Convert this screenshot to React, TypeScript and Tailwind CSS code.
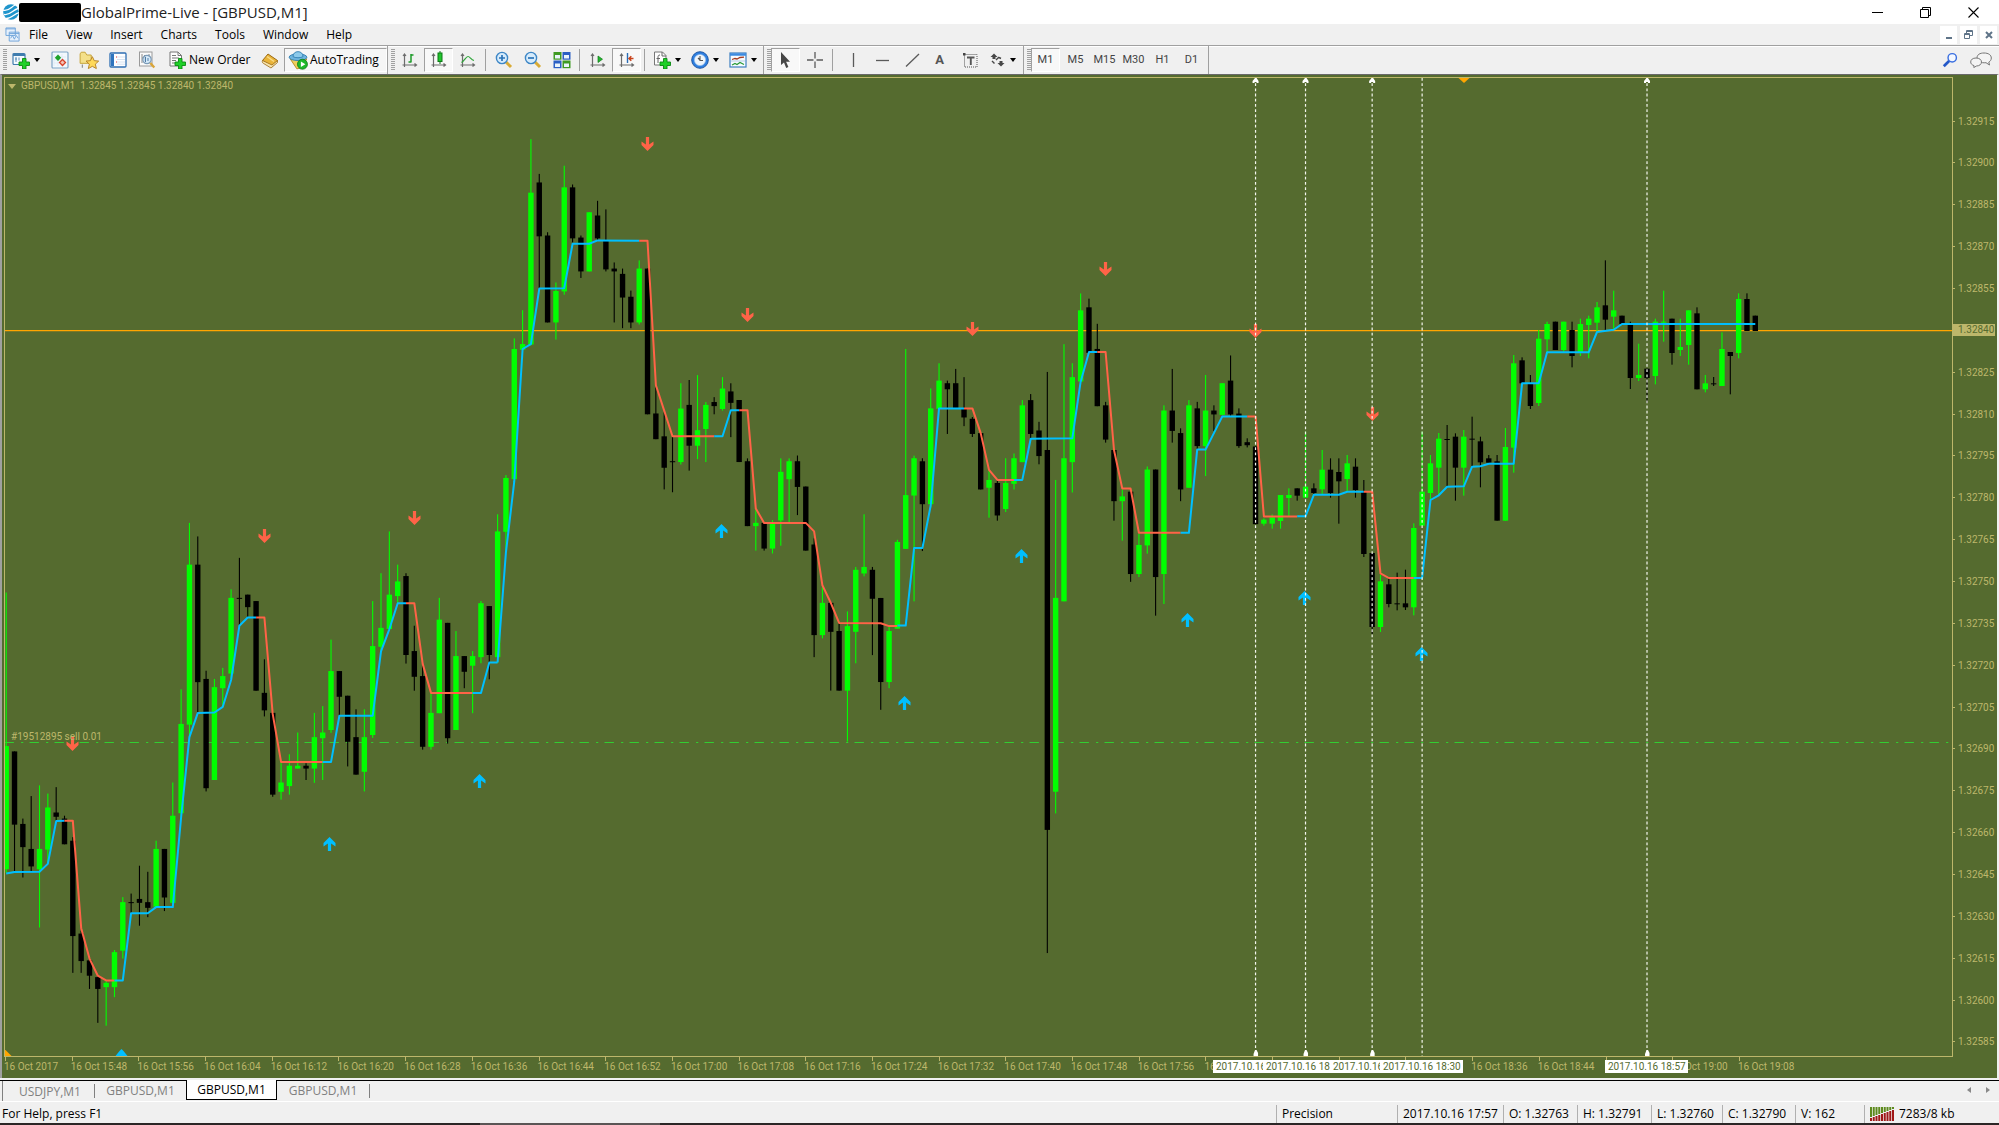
import React from "react";

/* ------------------------------------------------------------------ */
/* Market data                                                         */
/* ------------------------------------------------------------------ */

// Each block holds consecutive bars as "direction high top bottom low",
// in the block's own units: y = top + value / zoom.
type Block = { first: number; top: number; zoom: number; bars: string; lines: [string, string][] };

const UP = "#00bfff";
const DOWN = "#ff6347";

const blocks: Block[] = [
  {
    first: 0,
    top: 480,
    zoom: 2.8,
    bars:
      "g 315 745 1090 1100;k 760 760 965 1098;k 948 963 1028 1113;k 885 1033 1082 1095;g 855 1033 1090 1253;g 878 917 1035 1075;k 860 931 943 955;k 940 948 1020 1020;k 1000 1010 1277 1380;k 1262 1270 1347 1380;k 1340 1345 1388 1425;k 1390 1392 1425 1520;g 1400 1408 1420 1528;g 1316 1322 1420 1448;g 1168 1182 1318 1340;k 1158 1182 1184 1212;k 1080 1173 1184 1248;k 1097 1182 1198 1224;g 1010 1033 1195 1198;k 1033 1033 1169 1207;g 847 940 1184 1190;g 586 683 933 945;g 120 237 685 720;k 158 237 566 652;k 534 557 863 872;g 557 580 840 840;g 526 549 583 635;g 306 330 542 555;k 218 330 332 408;k 321 321 356 385;k 339 339 590 590;k 502 596 645 662;k 652 652 881 887;g 790 847 873 895;g 768 800 857 881;g 707 800 808 808;k 793 800 808 840;g 652 720 808 848;g 633 707 723 840;g 447 535 700 708;k 535 535 607 660;k 604 604 733 802;k 642 720 825 825;g 642 720 817 872;g 339 465 714 722;g 261 414 467 480;g 144 321 417 420;g 237 284 325 345;k 261 269 490 514;k 408 479 551 590;k 517 549 747 755;g 596 652 747 755;g 330 391 653 653;k 400 400 723 738;g 423 493 700 700;k 493 493 537 583;g 479 493 520 653;g 339 345 496 513;k 353 353 490 558",
    lines: [
      [UP, "0 1102 1 1098 4 1097 5 1075 6 955 7 954"],
      [DOWN, "7 954 8 954 9 1255 10 1340 11 1388 12 1401 13 1401"],
      [UP, "13 1401 14 1401 15 1213 17 1213 18 1196 20 1196 21 945 22 720 23 652 25 651 26 635 27 560 28 408 29 385 30 385"],
      [DOWN, "30 385 31 385 32 655 33 790 38 790"],
      [UP, "38 790 39 790 40 660 44 660 45 480 46 418 47 345 48 345"],
      [DOWN, "48 345 49 345 50 515 51 596 56 596"],
      [UP, "56 596 57 596 58 511 59 511"],
    ],
  },
  {
    first: 59,
    top: 120,
    zoom: 2.45,
    bars:
      "g 966 1008 1316 1330;g 870 877 1009 1060;g 535 561 880 890;g 466 549 563 563;g 47 178 550 552;k 132 153 285 413;k 275 283 496 496;g 398 419 496 538;g 112 165 420 428;k 158 165 290 300;k 283 288 371 387;g 226 226 371 371;k 198 234 290 295;k 219 295 366 371;k 349 364 371 496;k 364 377 435 510;k 418 433 496 510;g 344 364 496 501;k 364 364 721 721;k 655 719 782 782;k 716 775 852 905;k 775 836 838 912;g 645 707 838 844;k 637 698 798 859;g 625 760 798 831;g 691 698 757 838;k 679 691 701 721;g 630 658 708 712;k 645 665 693 777;k 686 686 838 838;k 829 836 995 995;g 950 987 995 1055;k 987 987 1050 1055;g 980 987 1050 1062;g 829 862 981 1043;g 829 836 880 985;k 822 836 899 968;k 898 898 1055 1055;k 1025 1040 1262 1316;g 1145 1183 1262 1270;k 1183 1183 1254 1398;k 1232 1252 1398 1398;g 1204 1240 1398 1523;g 1095 1102 1254 1331;g 966 1095 1111 1118;k 1095 1102 1173 1311;k 1171 1171 1377 1445;g 1240 1252 1377 1392",
    lines: [
      [UP, "59 1329 60 1060 61 885 62 561 63 549 64 413 67 412 68 303 70 303 71 295 76 296"],
      [DOWN, "76 296 77 296 78 650 79 712 80 775 85 775"],
      [UP, "85 775 86 775 87 711 88 711"],
      [DOWN, "88 711 89 711 90 952 91 987 96 987 97 1008 98 1140 99 1183 100 1232 105 1233 106 1240 107 1240"],
    ],
  },
  {
    first: 107,
    top: 280,
    zoom: 2.3059,
    bars:
      "g 599 604 804 804;g 159 496 620 620;g 405 411 497 741;k 411 418 517 625;g 250 296 517 525;g 192 232 297 297;k 232 238 252 355;k 205 238 295 297;k 224 297 317 337;k 316 320 355 362;k 353 353 483 483;g 440 461 479 548;k 462 468 543 555;g 411 468 528 535;g 400 411 470 483;g 277 289 420 420;k 263 277 355 365;k 327 347 406 425;k 212 392 1268 1552;g 461 733 1180 1230;g 148 411 741 741;g 192 224 420 490;g 31 70 234 234;k 43 63 168 168;k 101 159 291 291;k 281 289 368 375;k 392 392 510 555;g 483 499 510 601;k 488 488 678 696;g 585 611 678 685;g 430 437 612 631;k 437 437 685 774;g 289 301 678 747;k 205 301 348 375;k 342 353 483 510;g 277 289 479 479;k 281 296 383 391;g 219 301 383 452;k 289 301 310 348;g 238 238 311 311;k 174 232 310 313;k 296 308 383 387;k 365 374 381 386;k 384 384 563 563",
    lines: [
      [UP, "107 797 108 797 109 618 110 618 111 520 112 296 115 296"],
      [DOWN, "115 296 116 296 117 353 118 438 119 461 121 461"],
      [UP, "121 461 122 461 123 366 128 365 129 235 130 166 131 166"],
      [DOWN, "131 166 132 166 133 392 134 481 135 481 136 583 141 583"],
      [UP, "141 583 142 583 143 391 144 391 146 315 149 315"],
      [DOWN, "149 315 150 315 151 545 155 545"],
    ],
  },
  {
    first: 151,
    top: 240,
    zoom: 3,
    bars:
      "g 835 839 851 857;g 823 832 851 866;g 765 765 843 866;g 745 765 774 828;k 745 745 767 782;g 575 740 773 773;k 730 745 759 765;g 630 689 748 762;k 655 689 759 773;k 655 696 724 851;g 645 670 717 755;k 655 680 750 773;k 720 755 942 951;k 939 939 1161 1182;g 1005 1024 1161 1176;k 1014 1033 1092 1102;k 998 1090 1092 1111;k 989 1090 1102 1110;g 850 864 1102 1126;g 575 755 857 857;g 645 670 759 780;g 579 596 683 765;k 555 597 599 740;k 580 590 683 782;g 570 590 683 767;k 530 596 598 682;k 590 604 667 742;k 645 655 668 671;k 645 664 842 842;g 564 621 842 842;g 345 370 623 698;k 352 361 430 430;k 405 430 498 507;g 270 296 489 498;g 245 252 298 336;k 245 245 330 330;g 245 245 330 336;k 245 270 348 382;g 236 252 336 348;g 227 236 255 355;g 186 202 248 275;k 61 196 239 271;g 152 211 230 268;k 227 227 252 252;k 245 252 414 447;g 311 405 414 423;k 386 386 414 489;g 236 245 408 433;g 152 245 248 305;k 236 236 339 374;g 236 321 330 348;g 211 211 315 374;k 202 220 448 448;g 405 430 448 457;k 411 430 432 438;g 277 327 438 438;k 336 336 348 463;g 160 177 339 355;k 160 177 273 273;k 227 227 273 273",
    lines: [
      [UP, "155 829 156 829 157 764 160 764 161 755 163 755"],
      [DOWN, "163 755 164 755 165 1000 166 1014 169 1014"],
      [UP, "169 1014 170 1014 171 780 172 766 173 740 175 739 176 680 177 679 178 671 181 671 182 430 184 430 185 337 190 337 191 276 193 269 194 252 210 252"],
    ],
  },
];

const barX = (i: number) => 5.7 + i * 8.329;

const candles = blocks.flatMap((b) =>
  b.bars.split(";").map((row, n) => {
    const [dir, ...v] = row.split(" ");
    const [high, top, bottom, low] = v.map((q) => b.top + Number(q) / b.zoom);
    return { x: barX(b.first + n), color: dir === "g" ? "#00ff00" : "#000000", high, top, bottom, low };
  }),
);

const trend = blocks.flatMap((b) =>
  b.lines.map(([color, text]) => {
    const n = text.split(" ").map(Number);
    const pts: string[] = [];
    for (let i = 0; i < n.length; i += 2) pts.push(`${barX(n[i]).toFixed(1)},${(b.top + n[i + 1] / b.zoom).toFixed(1)}`);
    return { color, points: pts.join(" ") };
  }),
);

const sellMarks = [[72, 744], [264, 536], [414, 518], [647, 144], [747, 315], [972, 329], [1105, 269], [1255, 331], [1372, 414]];
const buyMarks = [[329, 844], [479, 781], [721, 531], [904, 703], [1021, 556], [1187, 620], [1304, 598], [1421, 654]];
const verticals = [150, 156, 164, 170, 197];

const prices = Array.from({ length: 23 }, (_, i) => (1.32915 - i * 0.00015).toFixed(5));
const times = [
  "16 Oct 2017",
  ...Array.from({ length: 26 }, (_, i) => {
    const m = 15 * 60 + 48 + i * 8;
    return `16 Oct ${Math.floor(m / 60)}:${String(m % 60).padStart(2, "0")}`;
  }),
];

/* ------------------------------------------------------------------ */
/* Chart                                                               */
/* ------------------------------------------------------------------ */

function Plot() {
  return (
    <svg viewBox="4.5 78 1947 978" preserveAspectRatio="none" className="block h-full w-full" role="img" aria-label="GBPUSD one minute chart">
      <line x1="4" x2="1953" y1="742.5" y2="742.5" stroke="#32cd32" strokeDasharray="9.4 7.2 2.2 6.2" />
      <line x1="4" x2="1953" y1="330.6" y2="330.6" stroke="#ffa500" strokeWidth="1.1" />
      {candles.map((c, i) => (
        <g key={i} fill={c.color}>
          <rect x={c.x - 0.55} y={c.high} width="1.1" height={c.low - c.high} />
          <rect x={c.x - 2.7} y={c.top} width="5.4" height={Math.max(1, c.bottom - c.top)} />
        </g>
      ))}
      {trend.map((t, i) => (
        <polyline key={i} points={t.points} fill="none" stroke={t.color} strokeWidth="2" strokeLinejoin="round" />
      ))}
      {sellMarks.map(([x, y]) => (
        <path key={`${x}`} transform={`translate(${x} ${y})`} fill={DOWN} d="M-1.6-7h3.2v7.6L6-2.6V1L0 7-6 1v-3.6L-1.6.6z" />
      ))}
      {buyMarks.map(([x, y]) => (
        <path key={`${x}`} transform={`translate(${x} ${y}) scale(1 -1)`} fill={UP} d="M-1.6-7h3.2v7.6L6-2.6V1L0 7-6 1v-3.6L-1.6.6z" />
      ))}
      {verticals.map((v) => (
        <g key={v} transform={`translate(${barX(v)} 0)`}>
          <line y1="78" y2="1056" stroke="#f4f6ee" strokeWidth="1.2" strokeDasharray="2.8 2.4" />
          {v !== 170 && <path fill="#fff" d="M-.5 78h1.5l2 3v2h-2v-1h-2v1h-2v-2zM-.5 1050h1.5l1.500 3v3h-4.500v-2z" />}
        </g>
      ))}
      <path d="M1458 78h11l-5.500 5z" fill="#ffa500" />
      <path d="M4 1049l7 7H4z" fill="#ffa500" />
      <path d="M115 1056l4-5 2-2 2 2 4 5z" fill="#00bfff" />
    </svg>
  );
}

function Flag({ text, className }: { text: string; className: string }) {
  return <span className={`absolute top-[3px] h-[13px] overflow-hidden bg-white pl-[3px] leading-[13px] whitespace-nowrap text-[#556b2f] ${className}`}>{text}</span>;
}

function Chart() {
  return (
    <main className="flex min-h-0 flex-1 border-t border-r-2 border-l-2 border-t-[#696969] border-r-[#f0f0f0] border-l-[#a0a0a0] bg-[#556b2f] font-[Roboto,sans-serif] text-[10px] text-[#bdb76b]">
      <div className="flex min-w-0 flex-1 flex-col pt-[2px] pl-[2px]">
        <div className="flex min-h-0 flex-1">
          <div className="relative min-w-0 flex-1 border border-[#bdb76b]">
            <Plot />
            <div className="absolute top-[2px] left-[3px] flex items-center leading-[12px] whitespace-pre">
              <svg viewBox="0 0 8 5" className="mr-[5px] h-[5px] w-[8px]">
                <path d="M0 0h8L4 5z" fill="#bdb76b" />
              </svg>
              GBPUSD,M1{"  "}1.32845 1.32845 1.32840 1.32840
            </div>
            <div className="absolute top-[653px] left-[6px] leading-[12px]">#19512895 sell 0.01</div>
          </div>
          <ol className="flex w-[44px] flex-col justify-between pt-[44px] pb-[15px]">
            {prices.map((p) => (
              <li key={p} className="flex h-0 items-center">
                {p === "1.32840" ? (
                  <span className="h-[12px] w-[42px] bg-[#bdb76b] pl-[5px] leading-[12px] text-[#556b2f]">{p}</span>
                ) : (
                  <>
                    <i className="mr-[3px] h-px w-[2px] bg-[#bdb76b]" />
                    {p}
                  </>
                )}
              </li>
            ))}
          </ol>
        </div>
        <div className="relative h-[21px]">
          <ol className="mr-[259px] flex justify-between">
            {times.map((t) => (
              <li key={t} className="w-0 whitespace-nowrap">
                <i className="ml-[1px] block h-[4px] w-px bg-[#bdb76b]" />
                <span className="block leading-[12px]">{t}</span>
              </li>
            ))}
          </ol>
          <Flag className="left-[1209px] w-[50px]" text="2017.10.16 18:10" />
          <Flag className="left-[1259px] w-[67px]" text="2017.10.16 18:16" />
          <Flag className="left-[1326px] w-[50px]" text="2017.10.16 18:24" />
          <Flag className="left-[1376px] w-[83px]" text="2017.10.16 18:30" />
          <Flag className="left-[1601px] w-[83px]" text="2017.10.16 18:57" />
        </div>
      </div>
    </main>
  );
}

/* ------------------------------------------------------------------ */
/* Icons                                                               */
/* ------------------------------------------------------------------ */

function Ico({ children, size = "h-[18px] w-[18px]" }: { children: React.ReactNode; size?: string }) {
  return (
    <svg viewBox="0 0 18 18" fill="none" className={`shrink-0 ${size}`} aria-hidden="true">
      {children}
    </svg>
  );
}

const Plus = () => <path d="M10.500 7.500h3.500v3.500h3.500v3.500h-3.500v3.500h-3.500v-3.500H7V11h3.500z" fill="#1fd028" stroke="#0a8a12" strokeWidth=".9" />;
const Axes = () => <path d="M3.500 3v13M1.500 14h14M2 5l1.500-2L5 5M13.500 12.500l2 1.500-2 1.500" stroke="#6c6c6c" strokeWidth="1.200" />;

const icons = {
  newChart: (
    <Ico>
      <rect x="1" y="2.500" width="12" height="11" rx="1" fill="#f4f9fd" stroke="#3f7cae" strokeWidth="1.200" />
      <path d="M1 4h12" stroke="#3f7cae" strokeWidth="2" />
      <path d="M4 6v5M3 8h2M7 6.500v3" stroke="#5b8fb9" />
      <Plus />
    </Ico>
  ),
  marketWatch: (
    <Ico>
      <rect x="1" y="1" width="16" height="16" rx="1" fill="#f2f8fd" stroke="#7fa6c7" strokeWidth="1.200" />
      <path d="M3 3v12M3 6h12M3 9h12M3 12h12M7 3v12M11 3v12" stroke="#dbe8f2" strokeWidth=".7" />
      <path d="M7 3.500l3.200 3.200L7 10 3.800 6.700z" fill="#1fa32a" />
      <path d="M11.500 8.500l3 3-3 3-3-3z" fill="#f4c2b4" stroke="#d8432a" strokeWidth="1.300" />
    </Ico>
  ),
  navigator: (
    <Ico size="h-[20px] w-[20px]">
      <path d="M1 3.500v8.500h10V4.500H7L5.500 2H2z" fill="#f4e08a" stroke="#c8a63c" strokeWidth=".9" />
      <path d="M12 6l1.700 3.600 4 .4-3 2.700.9 4-3.600-2-3.600 2 .9-4-3-2.700 4-.4z" fill="#ffd95a" stroke="#b9862a" strokeWidth=".9" />
      <path d="M3 13v3" stroke="#888" />
    </Ico>
  ),
  terminal: (
    <Ico>
      <rect x="1" y="2" width="16" height="14" rx="1" fill="#fff" stroke="#2f6fb3" strokeWidth="1.300" />
      <rect x="2" y="3" width="3" height="12" fill="#2f74bd" />
      <path d="M8 6h8M8 8.500h8M8 11h8M8 13.200h8" stroke="#cddced" strokeWidth=".8" />
      <path d="M7 6h1M7 11h1" stroke="#d33" />
    </Ico>
  ),
  tester: (
    <Ico>
      <rect x="1.500" y="1" width="12.500" height="14" fill="#fafafa" stroke="#9a9a9a" />
      <path d="M4 3v9M6.500 4v6M4 7h3M11 3v3" stroke="#8a8a8a" />
      <circle cx="9" cy="8.500" r="4.200" fill="#cfe6f8" fillOpacity=".85" stroke="#7d9cb8" strokeWidth="1.200" />
      <path d="M7.500 6v5M10 7v3" stroke="#4f7da8" />
      <path d="M12.300 12l4 4.500" stroke="#d9a53a" strokeWidth="2.400" />
    </Ico>
  ),
  order: (
    <Ico>
      <path d="M2 1h8l3.500 3.500V15H2z" fill="#fdfdfd" stroke="#777" />
      <path d="M10 1v3.500h3.500M4 4.500h4M4 7h7M4 9.500h4M4 12h3" stroke="#777" />
      <Plus />
    </Ico>
  ),
  book: (
    <Ico>
      <path d="M1.500 9.500L7 3l9.500 6.500-5.500 6.500z" fill="#e9b43a" stroke="#9b6a14" />
      <path d="M1.500 9.500c-.6 1.500 0 2.300.8 2.800L10 17l6.500-5.500v-2L11 14z" fill="#f7e3ab" stroke="#9b6a14" strokeWidth=".8" />
      <path d="M6 5.500l7 5" stroke="#f9dc86" strokeWidth="1.500" />
    </Ico>
  ),
  auto: (
    <Ico size="h-[20px] w-[20px]">
      <path d="M2 8l6 9 4-1 5-8z" fill="#efcf5c" stroke="#b58b24" strokeWidth=".8" />
      <ellipse cx="9" cy="6.500" rx="8" ry="3" fill="#6fb5df" stroke="#2f7db0" strokeWidth=".8" />
      <path d="M4.500 6c0-3 2-4.500 4.500-4.500S13.500 3 13.500 6c-2 1.300-7 1.300-9 0z" fill="#8ccaeb" stroke="#2f7db0" strokeWidth=".8" />
      <circle cx="13" cy="12.800" r="4.500" fill="#1db82a" stroke="#0d7a16" strokeWidth=".7" />
      <path d="M11.600 10.300l4 2.500-4 2.500z" fill="#fff" />
    </Ico>
  ),
  bars: (
    <Ico>
      <Axes />
      <path d="M10 3v8.500M7.500 11h2.500M10 4h2.500" stroke="#1c9a28" strokeWidth="1.500" />
    </Ico>
  ),
  candle: (
    <Ico>
      <Axes />
      <path d="M10 0v13" stroke="#0d7a16" />
      <rect x="8" y="2" width="4" height="8.500" fill="#22c52e" stroke="#0d7a16" />
    </Ico>
  ),
  line: (
    <Ico>
      <Axes />
      <path d="M2.500 11.500C6 9 7 5.500 9 5.500s3 3.500 6 4" stroke="#2fa53a" strokeWidth="1.200" />
    </Ico>
  ),
  zoomIn: (
    <Ico>
      <path d="M11 11l5 5" stroke="#d9ab35" strokeWidth="3" />
      <circle cx="7" cy="7" r="5.600" fill="#d6ebfb" stroke="#3d86c6" strokeWidth="1.400" />
      <path d="M7 4v6M4 7h6" stroke="#2b74b8" strokeWidth="1.700" />
    </Ico>
  ),
  zoomOut: (
    <Ico>
      <path d="M11 11l5 5" stroke="#d9ab35" strokeWidth="3" />
      <circle cx="7" cy="7" r="5.600" fill="#d6ebfb" stroke="#3d86c6" strokeWidth="1.400" />
      <path d="M4 7h6" stroke="#2b74b8" strokeWidth="1.700" />
    </Ico>
  ),
  tiles: (
    <Ico>
      <rect x=".5" y="1" width="8" height="7.700" fill="#3f9a22" />
      <rect x="9.500" y="1" width="8" height="7.700" fill="#2b5fc4" />
      <rect x=".5" y="9.500" width="8" height="7.700" fill="#2b5fc4" />
      <rect x="9.500" y="9.500" width="8" height="7.700" fill="#3f9a22" />
      <path d="M2 4h5v3.500H2zM11 4h5v3.500h-5zM2 12.500h5V16H2zM11 12.500h5V16h-5z" fill="#eaf4fb" />
    </Ico>
  ),
  scroll: (
    <Ico>
      <Axes />
      <path d="M9 5l4.500 3.200L9 11.500z" fill="#22b52e" stroke="#0d7a16" strokeWidth=".7" />
    </Ico>
  ),
  shift: (
    <Ico>
      <Axes />
      <path d="M9.500 2v10" stroke="#2a6db5" strokeWidth="1.400" />
      <path d="M11 7.500h4.500M13.300 5.200L11 7.500l2.300 2.300" stroke="#c8431c" strokeWidth="1.500" />
    </Ico>
  ),
  indicators: (
    <Ico>
      <path d="M1.500 1h8l3.500 3.500V14H1.500z" fill="#fdfdfd" stroke="#777" />
      <path d="M9 1v4h4M7 4c-2 0-2 1-2 3v5M3.500 7.500H7" stroke="#666" />
      <Plus />
    </Ico>
  ),
  clock: (
    <Ico>
      <circle cx="9" cy="9" r="8.300" fill="#2f7fe0" stroke="#164f9e" strokeWidth=".9" />
      <circle cx="9" cy="9" r="5.600" fill="#f0f5fa" stroke="#9dc4ee" strokeWidth=".6" />
      <path d="M9 5v4.500h3M7 7l2 2" stroke="#555" strokeWidth="1.100" />
    </Ico>
  ),
  template: (
    <Ico>
      <rect x="1" y="2" width="16" height="14" fill="#f7fbff" stroke="#3c7fc0" strokeWidth="1.200" />
      <path d="M1 3.500h16" stroke="#3c8be0" strokeWidth="2.500" />
      <path d="M3 8.500l3-1 2 .5 3-1.500 4-.3" stroke="#a33b22" strokeWidth="1.300" />
      <path d="M2 10h14" stroke="#9bbbd8" strokeWidth=".7" />
      <path d="M3 14l3-1.500 2 1 3-2 4 2" stroke="#2a9a38" strokeWidth="1.200" />
    </Ico>
  ),
  cursor: (
    <Ico>
      <path d="M4 1v13l3-2.600L9.200 17l2.200-1-2.300-5.300H13z" fill="#474747" />
    </Ico>
  ),
  cross: (
    <Ico>
      <path d="M9 1v6.500M9 10.500V17M1 9h6.500M10.500 9H17" stroke="#5a5a5a" strokeWidth="1.300" />
    </Ico>
  ),
  vline: (
    <Ico>
      <path d="M9.500 2v14" stroke="#5a5a5a" strokeWidth="1.300" />
    </Ico>
  ),
  hline: (
    <Ico>
      <path d="M3 9.500h13" stroke="#5a5a5a" strokeWidth="1.300" />
    </Ico>
  ),
  trendline: (
    <Ico>
      <path d="M4 15.500L17 3" stroke="#5a5a5a" strokeWidth="1.300" />
    </Ico>
  ),
  label: (
    <Ico>
      <rect x="4.500" y="3.500" width="12.500" height="12.500" stroke="#555" strokeWidth="1" strokeDasharray="1 1" />
      <path d="M3 2h2.500v2.500H3z" fill="#444" />
      <path d="M7 6.500h7.500M10.800 6v8" stroke="#555" strokeWidth="1.900" />
    </Ico>
  ),
  arrows: (
    <Ico>
      <path d="M6 2.500L9.500 6H7.500v2h-3V6h-2zM13 15.500L9.500 12h2v-2h3v2h2z" fill="#474747" />
      <path d="M4 10l2.500 2.500M8 9l3-3M11 6.500l2 1" stroke="#474747" strokeWidth="1.400" />
    </Ico>
  ),
};

/* ------------------------------------------------------------------ */
/* Chrome                                                              */
/* ------------------------------------------------------------------ */

const Grip = () => <i className="ml-[3px] h-[22px] w-[4px] shrink-0 bg-[repeating-linear-gradient(#a0a0a0_0_1px,#f0f0f0_1px_2px)]" />;
const Sep = () => <i className="mx-[3px] h-[22px] w-px shrink-0 bg-[#a0a0a0]" />;
const Caret = () => <i className="ml-[4px] h-0 w-0 border-x-[3px] border-t-[4px] border-x-transparent border-t-black" />;

function Tool({ label, icon, menu, active, children }: { label: string; icon?: React.ReactNode; menu?: boolean; active?: boolean; children?: React.ReactNode }) {
  return (
    <button
      type="button"
      aria-label={label}
      aria-pressed={active}
      className={`flex h-[24px] shrink-0 items-center justify-center ${menu ? "w-[38px]" : "w-[29px]"} ${
        active ? "border border-t-[#a0a0a0] border-r-white border-b-white border-l-[#a0a0a0] bg-[#f8f8f8]" : ""
      }`}
    >
      {icon}
      {children}
      {menu && <Caret />}
    </button>
  );
}

function Toolbar() {
  return (
    <div className="flex h-[29px] shrink-0 items-center border-t border-[#a0a0a0] bg-[#f0f0f0] shadow-[inset_0_1px_#ffffff]" role="toolbar">
      <div className="flex h-full w-[388px] shrink-0 items-center border-r border-[#a0a0a0]">
        <Grip />
        <Tool label="New chart" icon={icons.newChart} menu />
        <Tool label="Market Watch" icon={icons.marketWatch} />
        <Tool label="Navigator" icon={icons.navigator} />
        <Tool label="Terminal" icon={icons.terminal} />
        <Tool label="Strategy Tester" icon={icons.tester} />
        <button type="button" className="ml-[7px] flex h-[24px] w-[87px] shrink-0 items-center gap-[3px] whitespace-nowrap">
          {icons.order}
          New Order
        </button>
        <Tool label="MetaEditor" icon={icons.book} />
        <button
          type="button"
          aria-pressed="true"
          className="flex h-[24px] flex-1 items-center gap-[2px] border border-t-[#a0a0a0] border-r-white border-b-white border-l-[#a0a0a0] bg-[#f6f6f6] pl-[3px] whitespace-nowrap"
        >
          {icons.auto}
          AutoTrading
        </button>
      </div>
      <div className="flex h-full w-[376px] shrink-0 items-center border-r border-[#a0a0a0]">
        <Grip />
        <Tool label="Bar chart" icon={icons.bars} />
        <Tool label="Candlesticks" icon={icons.candle} active />
        <Tool label="Line chart" icon={icons.line} />
        <Sep />
        <Tool label="Zoom in" icon={icons.zoomIn} />
        <Tool label="Zoom out" icon={icons.zoomOut} />
        <Tool label="Tile windows" icon={icons.tiles} />
        <Sep />
        <Tool label="Auto scroll" icon={icons.scroll} />
        <Tool label="Chart shift" icon={icons.shift} active />
        <Sep />
        <Tool label="Indicators" icon={icons.indicators} menu />
        <Tool label="Periods" icon={icons.clock} menu />
        <Tool label="Templates" icon={icons.template} menu />
      </div>
      <div className="flex h-full w-[260px] shrink-0 items-center border-r border-[#a0a0a0]">
        <Grip />
        <Tool label="Cursor" icon={icons.cursor} active />
        <Tool label="Crosshair" icon={icons.cross} />
        <Sep />
        <div className="ml-[2px] flex">
          <Tool label="Vertical line" icon={icons.vline} />
          <Tool label="Horizontal line" icon={icons.hline} />
          <Tool label="Trendline" icon={icons.trendline} />
          <Tool label="Text">
            <span className="font-[Roboto,sans-serif] text-[13px] font-bold text-[#555]">A</span>
          </Tool>
          <Tool label="Text label" icon={icons.label} />
          <Tool label="Arrows" icon={icons.arrows} menu />
        </div>
      </div>
      <div className="flex h-full w-[185px] shrink-0 items-center border-r border-[#a0a0a0] font-[Roboto,sans-serif] text-[11px] text-[#444]">
        <Grip />
        <Tool label="M1" active>
          M1
        </Tool>
        <div className="ml-px flex">
          {["M5", "M15", "M30", "H1", "D1"].map((p) => (
            <Tool key={p} label={p}>
              {p}
            </Tool>
          ))}
        </div>
      </div>
      <div className="ml-auto flex items-center gap-[12px] pr-[7px]">
        <button type="button" aria-label="Search">
          <Ico size="h-[16px] w-[16px]">
            <path d="M8.500 9.500L2 16" stroke="#2458c8" strokeWidth="3" />
            <circle cx="11.500" cy="6.500" r="4.700" fill="#f4f8ff" stroke="#3a6fe0" strokeWidth="1.600" />
          </Ico>
        </button>
        <button type="button" aria-label="Community chat">
          <svg viewBox="0 0 22 16" fill="#f4f4f4" stroke="#777" className="h-[16px] w-[22px]">
            <path d="M14 1c4.500 0 7.300 2 7.300 5 0 2-1 3.200-2.500 4l.7 3-3.500-2.300C11 11.200 7 9.500 7 6s3-5 7-5z" />
            <path d="M6 6c3.300 0 5.500 1.700 5.500 4s-2.200 4-5 4L3.800 15.500 4 13.600C2 13 .7 11.700.7 10c0-2.300 2-4 5.300-4z" />
          </svg>
        </button>
      </div>
    </div>
  );
}

const mdiButton = "flex h-[18px] w-[17px] items-center justify-center bg-white";

export default function App() {
  return (
    <div className="flex h-screen flex-col overflow-hidden bg-[#f0f0f0] font-['Open_Sans',sans-serif] text-[12px] text-black">
      <header className="flex h-[24px] shrink-0 items-center bg-white pl-[3px]">
        <svg viewBox="0 0 16 16" className="h-[16px] w-[16px]" aria-hidden="true">
          <circle cx="8" cy="8" r="7.800" fill="#1f95cc" />
          <path d="M0 6c5 2 8-3 12-5M1 10.500c6 1.500 9-5 14-6M3 14.500c5 .5 8-4.500 13-6" stroke="#fff" strokeWidth="1.300" fill="none" />
        </svg>
        <i className="h-[19px] w-[62px] rounded-[2px] bg-black" />
        <h1 className="text-[15px] leading-[24px] text-[#222]">GlobalPrime-Live - [GBPUSD,M1]</h1>
        <div className="ml-auto flex pr-[2px]">
          <button type="button" aria-label="Minimize" className="flex h-[22px] w-[48px] items-center justify-center">
            <i className="h-px w-[11px] bg-black" />
          </button>
          <button type="button" aria-label="Restore" className="flex h-[22px] w-[48px] items-center justify-center">
            <svg viewBox="0 0 11 11" fill="none" stroke="#000" className="h-[11px] w-[11px]">
              <path d="M.5 2.500h8v8h-8zM2.500 2.500v-2h8v8h-2" />
            </svg>
          </button>
          <button type="button" aria-label="Close" className="flex h-[22px] w-[48px] items-center justify-center">
            <svg viewBox="0 0 11 11" fill="none" stroke="#000" strokeWidth="1.100" className="h-[11px] w-[11px]">
              <path d="M.5.5l10 10M10.500.5l-10 10" />
            </svg>
          </button>
        </div>
      </header>

      <nav className="flex h-[21px] shrink-0 items-center pr-[2px] pl-[5px]">
        <svg viewBox="0 0 16 16" fill="#e6f0fb" stroke="#6ea3da" className="h-[15px] w-[15px]" aria-hidden="true">
          <path d="M1 1h10v8H1zM4.500 5.500H15V15H4.500z" />
          <path d="M1 2h10M4.500 7H15M6 12l2-3 2 4 2-4 2 3" fill="none" />
        </svg>
        {["File", "View", "Insert", "Charts", "Tools", "Window", "Help"].map((m) => (
          <button type="button" key={m} className="px-[9px] leading-[20px]">
            {m}
          </button>
        ))}
        <div className="ml-auto flex gap-[3px]">
          <button type="button" aria-label="Minimize chart" className={mdiButton}>
            <i className="mt-[6px] h-[2px] w-[6px] bg-[#5f7488]" />
          </button>
          <button type="button" aria-label="Restore chart" className={mdiButton}>
            <svg viewBox="0 0 9 9" fill="none" stroke="#5f7488" className="h-[9px] w-[9px]">
              <path d="M.5 3.500h5v5h-5zM.5 4.500h5M2.500 3V.5h6v5H6M2.500 1.500h6" />
            </svg>
          </button>
          <button type="button" aria-label="Close chart" className={mdiButton}>
            <svg viewBox="0 0 8 8" stroke="#5f7488" strokeWidth="2" className="h-[8px] w-[8px]">
              <path d="M1 1l6 6M7 1L1 7" />
            </svg>
          </button>
        </div>
      </nav>

      <Toolbar />
      <Chart />

      <div className="mt-[2px] flex h-[21px] shrink-0 items-start border-t border-black text-[#808080]" role="tablist">
        <button type="button" role="tab" className="ml-[2px] h-[20px] w-[92px] border-l border-[#808080] pl-[3px] leading-[19px]">
          USDJPY,M1
        </button>
        <i className="mt-[3px] h-[14px] w-px bg-[#808080]" />
        <button type="button" role="tab" className="w-[91px] leading-[19px]">
          GBPUSD,M1
        </button>
        <button type="button" role="tab" aria-selected="true" className="-mt-px h-[20px] w-[91px] border-x border-b border-black bg-white leading-[20px] text-black">
          GBPUSD,M1
        </button>
        <button type="button" role="tab" className="w-[92px] leading-[19px]">
          GBPUSD,M1
        </button>
        <i className="mt-[3px] h-[14px] w-px bg-[#808080]" />
        <div className="mt-[6px] mr-[9px] ml-auto flex gap-[15px]">
          <button type="button" aria-label="Previous tab" className="h-0 w-0 border-y-[3px] border-r-[4px] border-y-transparent border-r-[#888]" />
          <button type="button" aria-label="Next tab" className="h-0 w-0 border-y-[3px] border-l-[4px] border-y-transparent border-l-[#888]" />
        </div>
      </div>

      <footer className="flex h-[22px] shrink-0 items-end border-t border-white leading-[18px] whitespace-nowrap">
        <span className="flex-1 pl-[2px]">For Help, press F1</span>
        <span className="w-[121px] border-l border-[#b0b0b0] pl-[5px]">Precision</span>
        <span className="w-[106px] border-l border-[#b0b0b0] pl-[5px]">2017.10.16 17:57</span>
        <span className="w-[74px] border-l border-[#b0b0b0] pl-[5px]">O: 1.32763</span>
        <span className="w-[74px] border-l border-[#b0b0b0] pl-[5px]">H: 1.32791</span>
        <span className="w-[71px] border-l border-[#b0b0b0] pl-[5px]">L: 1.32760</span>
        <span className="w-[73px] border-l border-[#b0b0b0] pl-[5px]">C: 1.32790</span>
        <span className="w-[69px] border-l border-[#b0b0b0] pl-[5px]">V: 162</span>
        <span className="flex w-[135px] items-center gap-[4px] border-l border-[#b0b0b0] pl-[5px]">
          <svg viewBox="0 0 25 14" className="h-[14px] w-[25px]" aria-hidden="true">
            {Array.from({ length: 9 }, (_, i) => (
              <g key={i}>
                <rect x={i * 2.75} y="0" width="2" height={10 - i} fill="#5d8a1e" />
                <rect x={i * 2.75} y={11 - i} width="2" height={3 + i} fill="#a01818" />
              </g>
            ))}
          </svg>
          7283/8 kb
        </span>
      </footer>
      <div className="flex h-[2px] shrink-0 bg-[#2b2626]">
        <i className="ml-[24%] h-full w-[9%] bg-[#5a5555]" />
      </div>
    </div>
  );
}
